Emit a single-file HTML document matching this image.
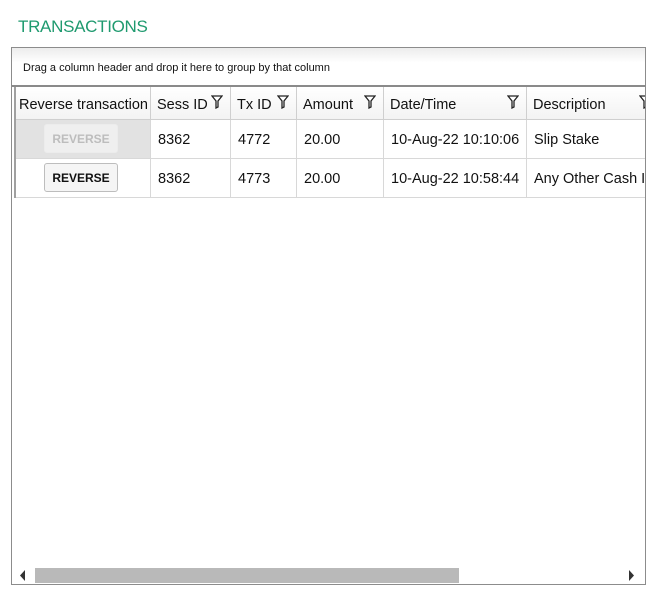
<!DOCTYPE html>
<html><head><style>
body{margin:0;width:662px;height:589px;background:#fff;font-family:"Liberation Sans",sans-serif;position:relative;overflow:hidden}
.a{position:absolute}
.t{left:18px;top:17px;font-size:17px;color:#1f9a6f;letter-spacing:-0.3px}
.box{left:11px;top:47px;width:633px;height:536px;border:1px solid #8c8c8c}
.grp{left:12px;top:48px;width:633px;height:37px;background:linear-gradient(#ececec,#fff 40%);border-bottom:2px solid #8a8a8a;font-size:11px;line-height:40px;text-indent:11px;color:#111}
.hdr{top:87px;height:33px;background:linear-gradient(#fff,#f3f3f3);border-bottom:1px solid #cfcfcf;font-size:14.5px;line-height:36px;color:#111;box-sizing:border-box;padding-left:6px;border-right:1px solid #cfcfcf;white-space:nowrap;overflow:hidden}
.c{height:39px;font-size:14.5px;line-height:41px;color:#111;box-sizing:border-box;padding-left:7px;border-right:1px solid #d8d8d8;border-bottom:1px solid #d8d8d8;white-space:nowrap;overflow:hidden}
.f{position:absolute;top:8px;width:12px;height:14px}
.btn{position:absolute;left:30px;top:4px;width:74px;height:29px;border:1px solid #bdbdbd;border-radius:3px;background:#f5f5f5;font-weight:bold;font-size:12px;line-height:29px;text-align:center;text-indent:0;padding:0;box-sizing:border-box}
</style></head><body>
<div class="a t">TRANSACTIONS</div>
<div class="a box"></div>
<div class="a grp">Drag a column header and drop it here to group by that column</div>
<div class="a" style="left:14px;top:87px;width:2px;height:111px;background:#a0a0a0"></div>
<svg width="0" height="0" style="position:absolute"><defs><symbol id="fl" viewBox="0 0 12 14"><path d="M1 1H11L7 6V12L5 13V6Z" fill="#fff" stroke="#222" stroke-width="1.3"/></symbol></defs></svg>
<div class="a hdr" style="left:16px;width:135px;padding-left:3px">Reverse transaction</div>
<div class="a hdr" style="left:151px;width:80px">Sess ID<svg class="f" style="left:60px"><use href="#fl"/></svg></div>
<div class="a hdr" style="left:231px;width:66px">Tx ID<svg class="f" style="left:46px"><use href="#fl"/></svg></div>
<div class="a hdr" style="left:297px;width:87px">Amount<svg class="f" style="left:67px"><use href="#fl"/></svg></div>
<div class="a hdr" style="left:384px;width:143px">Date/Time<svg class="f" style="left:123px"><use href="#fl"/></svg></div>
<div class="a hdr" style="left:527px;width:118px;border-right:none">Description<svg class="f" style="left:112px"><use href="#fl"/></svg></div>

<div class="a c" style="left:16px;top:120px;width:135px;background:#e2e2e2"><div class="btn" style="color:#bdbdbd;border-color:#ececec;background:#efefef;left:28px">REVERSE</div></div>
<div class="a c" style="left:151px;top:120px;width:80px">8362</div>
<div class="a c" style="left:231px;top:120px;width:66px">4772</div>
<div class="a c" style="left:297px;top:120px;width:87px">20.00</div>
<div class="a c" style="left:384px;top:120px;width:143px">10-Aug-22 10:10:06</div>
<div class="a c" style="left:527px;top:120px;width:118px;border-right:none">Slip Stake</div>

<div class="a c" style="left:16px;top:159px;width:135px"><div class="btn" style="left:28px">REVERSE</div></div>
<div class="a c" style="left:151px;top:159px;width:80px">8362</div>
<div class="a c" style="left:231px;top:159px;width:66px">4773</div>
<div class="a c" style="left:297px;top:159px;width:87px">20.00</div>
<div class="a c" style="left:384px;top:159px;width:143px">10-Aug-22 10:58:44</div>
<div class="a c" style="left:527px;top:159px;width:118px;border-right:none">Any Other Cash In</div>

<svg class="a" style="left:17px;top:569px" width="10" height="13"><path d="M8 1L3 6.5L8 12Z" fill="#333"/></svg>
<div class="a" style="left:35px;top:568px;width:424px;height:15px;background:#b9b9b9"></div>
<svg class="a" style="left:627px;top:569px" width="10" height="13"><path d="M2 1L7 6.5L2 12Z" fill="#333"/></svg>
</body></html>
